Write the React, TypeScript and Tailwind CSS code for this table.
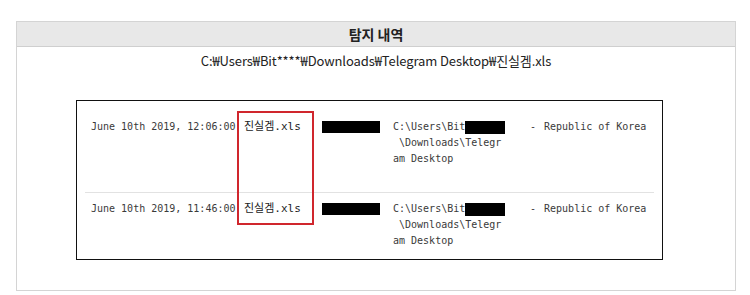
const mono = "font-['DejaVu_Sans_Mono','Noto_Sans_CJK_KR',monospace]";

function Redacted({ w, h }: { w: number; h: number }) {
  return <span className="inline-block bg-black align-middle" style={{ width: w, height: h }} />;
}

function Row({ time, last }: { time: string; last?: boolean }) {
  return (
    <div
      className={`flex text-[10px] leading-[16px] text-[#3a3a3a] ${mono} ${
        last ? 'pt-[8px] pb-[9px]' : 'pb-[25px] border-b border-[#e2e2e2]'
      }`}
    >
      <div className="w-[152px] pl-[6px] whitespace-pre">{time}</div>
      <div className="w-[85px] pl-[7px] text-[11px] text-[#222] whitespace-pre">진실겜.xls</div>
      <div className="w-[71px] pt-[2px]">
        <div className="w-[58px] h-[12px] bg-black" />
      </div>
      <div className="w-[137px] whitespace-pre">
        <div className="flex items-center">
          C:\Users\Bit<Redacted w={40} h={13} />
        </div>
        <div> \Downloads\Telegr</div>
        <div>am Desktop</div>
      </div>
      <div className="whitespace-pre">
        <span className="mr-[8px]">-</span>Republic of Korea
      </div>
    </div>
  );
}

export default function App() {
  return (
    <div className="w-[750px] h-[295px] bg-white pt-[21px] pl-[16px]">
      <div className="w-[720px] h-[270px] border border-[#d4d4d4] font-['Noto_Sans_CJK_KR','Noto_Sans',sans-serif]">
        <div className="h-[25px] bg-[#e8e8e8] border-b border-[#cfcfcf] flex items-center justify-center text-[14px] font-bold text-[#222]">
          탐지 내역
        </div>
        <div className="h-[28px] flex items-center justify-center text-[13px] tracking-[-0.1px] text-[#222]">
          C:₩Users₩Bit****₩Downloads₩Telegram Desktop₩진실겜.xls
        </div>
        <div className="relative ml-[59px] mt-[25px] w-[587px] h-[160px] border border-[#111] pt-[18px] px-[8px]">
          <Row time="June 10th 2019, 12:06:00" />
          <Row time="June 10th 2019, 11:46:00" last />
          <div className="absolute left-[160px] top-[10px] w-[77px] h-[114px] border-2 border-[#d0262d]" />
        </div>
      </div>
    </div>
  );
}
